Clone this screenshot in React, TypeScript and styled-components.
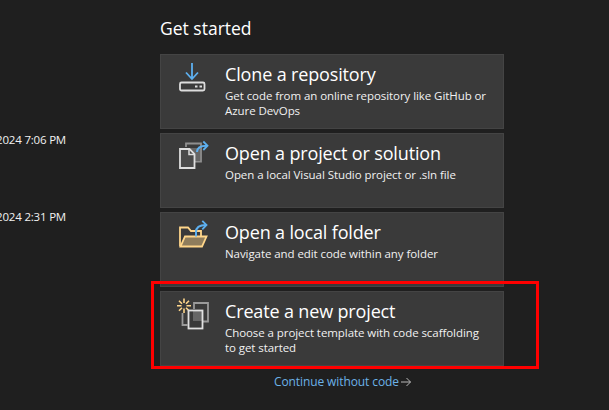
import styled, { createGlobalStyle } from "styled-components";
import type { ReactNode } from "react";

const GlobalStyle = createGlobalStyle`
    html, body {
        margin: 0;
        padding: 0;
        background-color: #1f1f1f;
    }
    body {
        font-family: "Open Sans", "Noto Sans", "Liberation Sans", sans-serif;
        overflow: hidden;
    }
`;

const Page = styled.div`
    position: relative;
    width: 609px;
    height: 410px;
    display: flex;
    overflow: hidden;
    background-color: #1f1f1f;
    color: #ffffff;
`;

const RecentColumn = styled.div`
    width: 160px;
    flex: none;
    padding: 131px 94px 0 0;
    box-sizing: border-box;
    display: flex;
    flex-direction: column;
    align-items: flex-end;
    gap: 59px;
`;

const RecentDate = styled.div`
    height: 18px;
    line-height: 18px;
    font-size: 11.5px;
    letter-spacing: -0.2px;
    white-space: nowrap;
    color: #f1f1f1;
`;

const StartColumn = styled.div`
    width: 344px;
    flex: none;
    display: flex;
    flex-direction: column;
`;

const Heading = styled.h1`
    margin: 0;
    height: 54px;
    padding-top: 16px;
    box-sizing: border-box;
    font-size: 17.5px;
    line-height: 24px;
    font-weight: 400;
`;

const CardList = styled.div`
    display: flex;
    flex-direction: column;
    gap: 4px;
`;

const Card = styled.div`
    height: 75px;
    box-sizing: border-box;
    display: flex;
    background-color: #3a3a3a;
    border: 1px solid #444444;
`;

const IconSlot = styled.div`
    width: 64px;
    flex: none;
    padding: 5px 0 0 15px;
    box-sizing: border-box;
`;

const CardBody = styled.div`
    flex: 1;
    padding-top: 6px;
    padding-right: 8px;
`;

const CardTitle = styled.div`
    font-size: 18px;
    line-height: 27px;
    letter-spacing: -0.15px;
`;

const CardText = styled.div`
    font-size: 11.5px;
    line-height: 15px;
    letter-spacing: -0.07px;
    color: #f1f1f1;
`;

const ContinueLink = styled.a`
    margin: 8px 0 0 114px;
    align-self: flex-start;
    font-size: 12px;
    line-height: 16px;
    letter-spacing: -0.1px;
    color: #6cb2e8;
    display: flex;
    align-items: center;
    gap: 1px;
`;

const Highlight = styled.div`
    position: absolute;
    left: 151px;
    top: 281px;
    width: 388px;
    height: 88px;
    box-sizing: border-box;
    border: 3px solid #fe0000;
    pointer-events: none;
`;

const CloneIcon = () => (
    <svg width="34" height="34" viewBox="0 0 34 34" fill="none">
        <path d="M16 3v15.500M10 12.500l6 6.500 6-6.500" stroke="#5db0f0" strokeWidth="1.800" />
        <rect x="4" y="22.500" width="24.500" height="8" rx="1.500" stroke="#dcdcdc" strokeWidth="1.800" />
        <path d="M19 26.500h2.500M23.500 26.500h2.500" stroke="#dcdcdc" strokeWidth="2" />
    </svg>
);

const OpenProjectIcon = () => (
    <svg width="34" height="34" viewBox="0 0 34 34" fill="none">
        <path d="M10 8V4.500h15V22.500h-6" stroke="#8f8f8f" strokeWidth="1.800" />
        <rect x="13" y="9" width="11" height="12.500" fill="#666666" />
        <path d="M4 10h9.500l5 5V29H4z" fill="#4a4a4a" stroke="#dedede" strokeWidth="1.800" />
        <path d="M13 10v5.500h5.500" stroke="#dedede" strokeWidth="1.500" />
        <path d="M21 13c0-4.500 3-6.300 10-6.300" stroke="#5db0f0" strokeWidth="2" />
        <path d="M27.300 2.500l4.200 4.200-4.200 4.300" stroke="#5db0f0" strokeWidth="1.800" />
    </svg>
);

const OpenFolderIcon = () => (
    <svg width="34" height="34" viewBox="0 0 34 34" fill="none">
        <path d="M4 28.500V9.500h8l3 3.500H25v5" stroke="#ffd68a" strokeWidth="1.800" />
        <path d="M4.500 28.500l4.500-10h21.500l-4.500 10z" fill="#8f7d5c" stroke="#ffd68a" strokeWidth="1.800" />
        <path d="M20 18.500V14c0-5 3-7 10-7" stroke="#5db0f0" strokeWidth="2" />
        <path d="M26.300 2.800l4.200 4.200-4.200 4.300" stroke="#5db0f0" strokeWidth="1.800" />
    </svg>
);

const NewProjectIcon = () => (
    <svg width="34" height="34" viewBox="0 0 34 34" fill="none">
        <path d="M8 1.500v4.500M8 11.500v4.500M1 8.700h4.500M10.500 8.700h4.500M3 3.700l3 3M10 10.700l3 3M3 13.700l3-3M10 6.700l3-3" stroke="#ffd68a" strokeWidth="1.600" />
        <rect x="17" y="13" width="9" height="11" fill="#666666" />
        <path d="M18 12V6h14v18.500h-5" stroke="#9a9a9a" strokeWidth="1.800" />
        <path d="M6.500 16v12h5" stroke="#9a9a9a" strokeWidth="1.800" />
        <rect x="12.500" y="13.500" width="14" height="18" stroke="#e0e0e0" strokeWidth="1.800" />
    </svg>
);

type Action = {
    title: string;
    text: ReactNode;
    icon: ReactNode;
};

const actions: Action[] = [
    {
        title: "Clone a repository",
        text: <>Get code from an online repository like GitHub or<br />Azure DevOps</>,
        icon: <CloneIcon />,
    },
    {
        title: "Open a project or solution",
        text: "Open a local Visual Studio project or .sln file",
        icon: <OpenProjectIcon />,
    },
    {
        title: "Open a local folder",
        text: "Navigate and edit code within any folder",
        icon: <OpenFolderIcon />,
    },
    {
        title: "Create a new project",
        text: <>Choose a project template with code scaffolding<br />to get started</>,
        icon: <NewProjectIcon />,
    },
];

export default function App() {
    return (
        <Page>
            <GlobalStyle />
            <RecentColumn>
                <RecentDate>2024 7:06 PM</RecentDate>
                <RecentDate>2024 2:31 PM</RecentDate>
            </RecentColumn>
            <StartColumn>
                <Heading>Get started</Heading>
                <CardList>
                    {actions.map((action) => (
                        <Card key={action.title}>
                            <IconSlot>{action.icon}</IconSlot>
                            <CardBody>
                                <CardTitle>{action.title}</CardTitle>
                                <CardText>{action.text}</CardText>
                            </CardBody>
                        </Card>
                    ))}
                </CardList>
                <ContinueLink>
                    Continue without code
                    <svg width="12" height="10" viewBox="0 0 12 10" fill="none">
                        <path d="M1 5h9.500M6.500 1l4 4-4 4" stroke="#b8b8b8" strokeWidth="1" />
                    </svg>
                </ContinueLink>
            </StartColumn>
            <Highlight />
        </Page>
    );
}
